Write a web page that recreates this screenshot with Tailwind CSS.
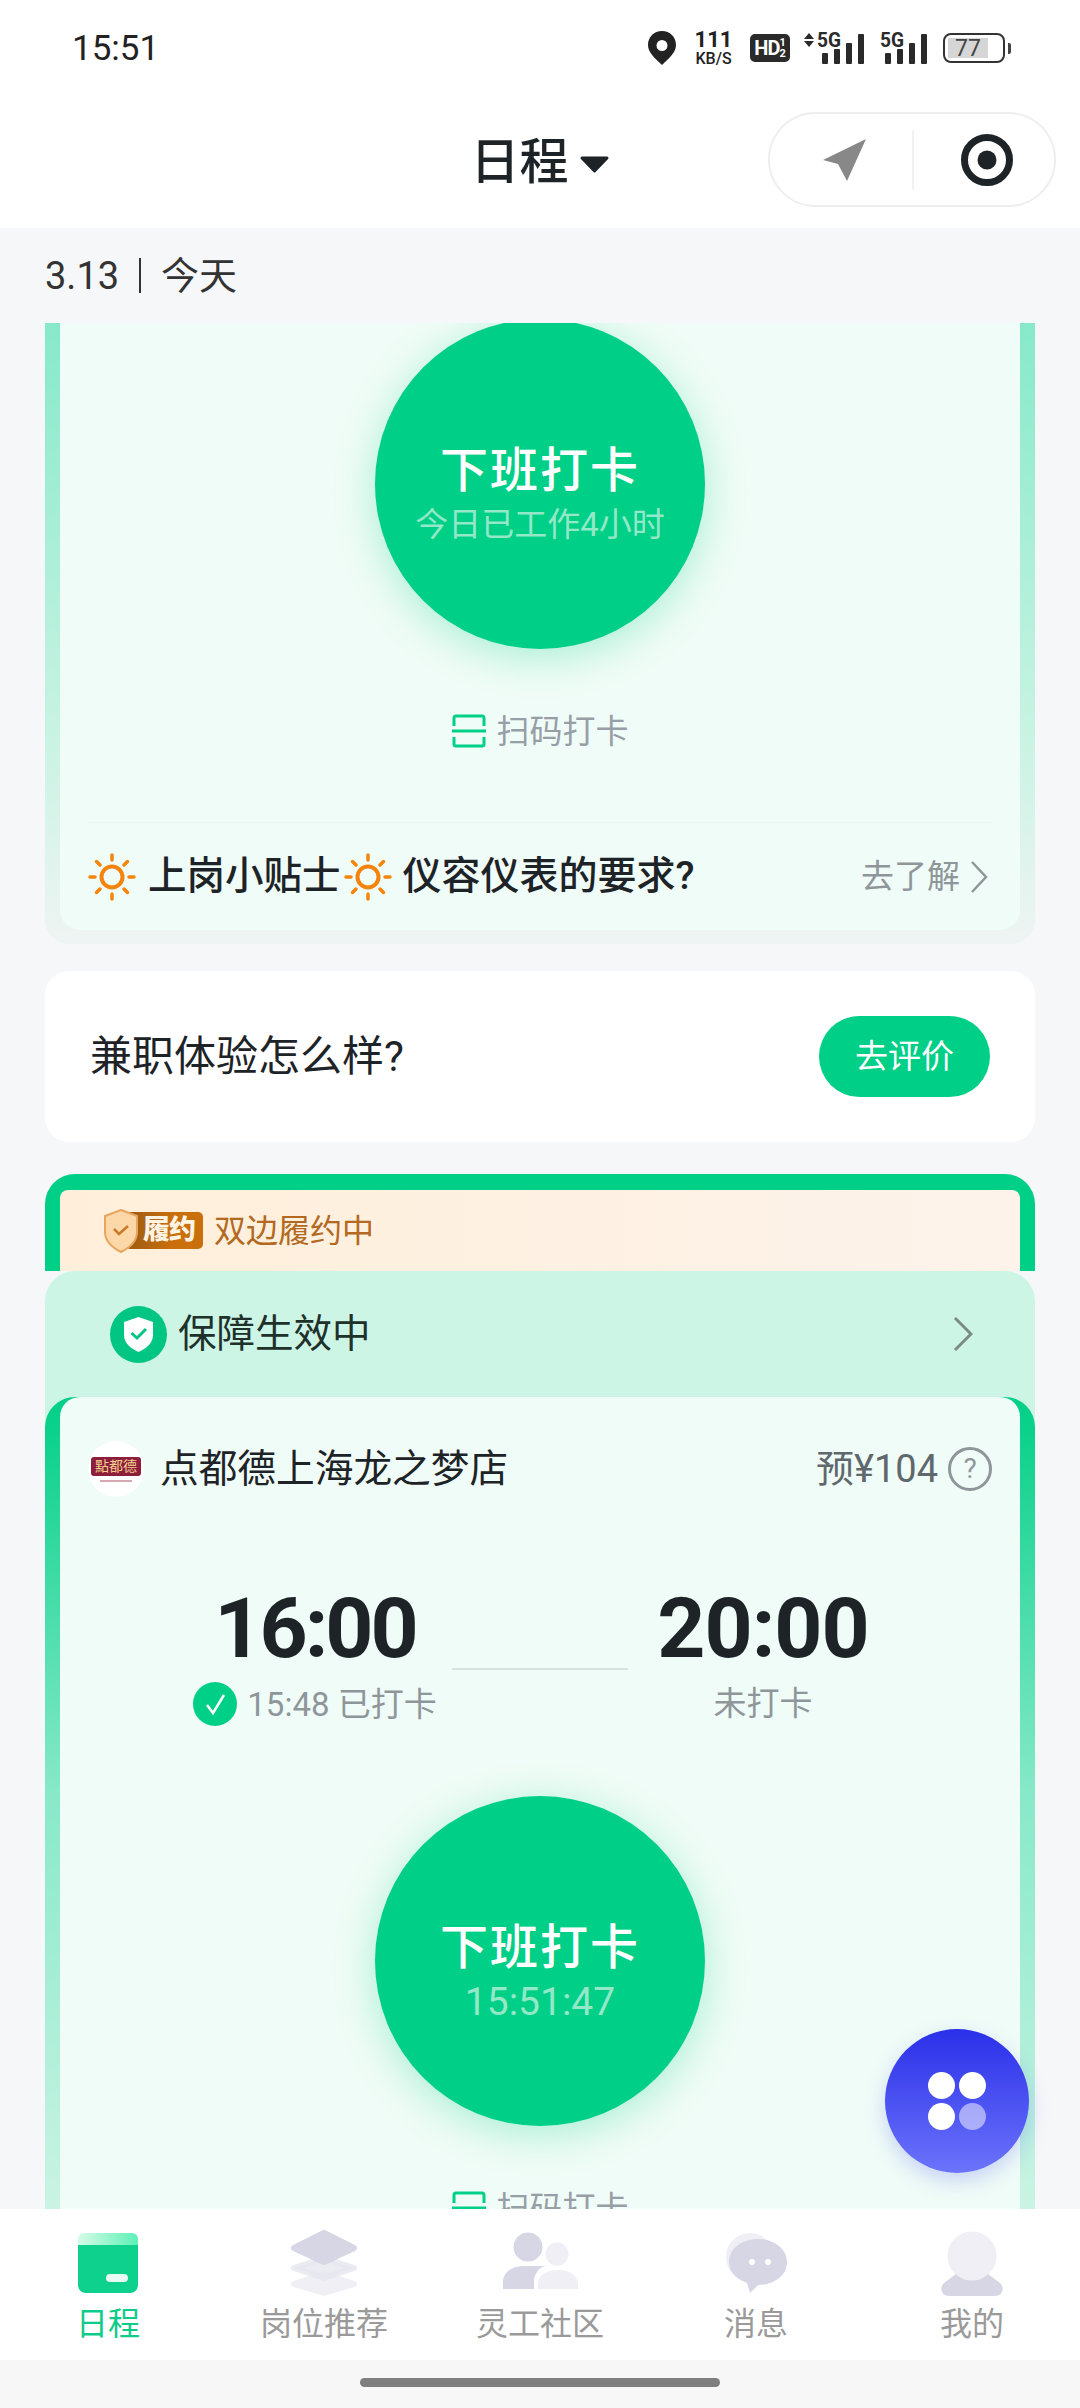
<!DOCTYPE html>
<html lang="zh-CN">
  <head>
    <meta charset="UTF-8" />
    <meta name="viewport" content="width=device-width, initial-scale=1.0" />
    <title>日程</title>
    <script src="https://cdn.jsdelivr.net/npm/@tailwindcss/browser@4"></script>
  </head>
  <body class="bg-white">
    <div class="relative w-[1080px] h-[2408px] flex flex-col overflow-hidden bg-[#f6f7f9] text-[#1d2327] font-['Roboto','Noto_Sans_CJK_SC',sans-serif]">
      <!-- status bar -->
      <div class="h-[100px] shrink-0 bg-white flex items-center pl-[72px] pr-[69px] pb-[4px]">
        <span class="text-[35px] leading-none text-[#222]">15:51</span>
        <div class="ml-auto flex items-center">
          <svg class="w-[28px] h-[34px]" viewBox="0 0 28 34">
            <path fill-rule="evenodd" fill="#222" d="M14 0C6 0 0 6 0 14c0 8 8 14 14 20 6-6 14-12 14-20C28 6 22 0 14 0zm0 9a5.500 5.500 0 1 1 0 11 5.500 5.500 0 0 1 0-11z" />
          </svg>
          <div class="ml-[17px] w-[41px] flex flex-col items-center text-[#222] font-medium">
            <span class="text-[22px] leading-[22px] font-bold">111</span>
            <span class="text-[16px] leading-[16px]">KB/S</span>
          </div>
          <div class="ml-[16px] w-[40px] h-[28px] rounded-[5px] bg-[#2a2a2a] flex items-center justify-center text-white font-bold">
            <span class="text-[20px] leading-none tracking-[-1px]">HD</span>
            <span class="flex flex-col items-center text-[11px] leading-[11px]"><span>1</span><span>2</span></span>
          </div>
          <svg class="ml-[14px] w-[60px] h-[32px] overflow-visible" viewBox="0 0 60 32" fill="#2a2a2a">
            <path d="M5 1 10 7H0zM5 15 0 9H10z" />
            <text x="13" y="15" font-family="Roboto" font-weight="700" font-size="20" textLength="24" lengthAdjust="spacingAndGlyphs">5G</text>
            <rect x="18" y="21" width="6" height="11" rx="1" />
            <rect x="30" y="17" width="6" height="15" rx="1" />
            <rect x="42" y="11" width="6" height="21" rx="1" />
            <rect x="54" y="2" width="6" height="30" rx="1" />
          </svg>
          <svg class="ml-[16px] w-[47px] h-[32px] overflow-visible" viewBox="0 0 47 32" fill="#2a2a2a">
            <text x="0" y="15" font-family="Roboto" font-weight="700" font-size="20" textLength="24" lengthAdjust="spacingAndGlyphs">5G</text>
            <rect x="5" y="21" width="6" height="11" rx="1" />
            <rect x="17" y="17" width="6" height="15" rx="1" />
            <rect x="29" y="11" width="6" height="21" rx="1" />
            <rect x="41" y="2" width="6" height="30" rx="1" />
          </svg>
          <div class="ml-[16px] flex items-center">
            <div class="w-[62px] h-[30px] rounded-[8px] border-[2.500px] border-[#333] p-[3px]">
              <div class="w-[40px] h-full bg-[#d6d6d6] flex items-center justify-center text-[23px] leading-none text-[#444]">77</div>
            </div>
            <div class="ml-[3px] w-[3px] h-[11px] rounded-r-[2px] bg-[#444]"></div>
          </div>
        </div>
      </div>

      <!-- header -->
      <div class="h-[128px] shrink-0 bg-white grid grid-cols-[1fr_auto_1fr] items-center pb-[9px]">
        <div></div>
        <div class="flex items-center text-[49px] font-medium leading-none pt-[5px]">
          <span>日程</span>
          <svg class="ml-[10px] mt-[4px] w-[31px] h-[19px]" viewBox="0 0 31 19">
            <path fill="#1d2327" stroke="#1d2327" stroke-width="3" stroke-linejoin="round" d="M3 3H28L15.500 16Z" />
          </svg>
        </div>
        <div class="flex justify-end pr-[24px]">
          <div class="w-[288px] h-[95px] rounded-[48px] border-2 border-[#eeeeee] flex items-center">
            <svg class="ml-[53px] w-[43px] h-[42px]" viewBox="0 0 43 42">
              <path fill="#888888" d="M43 0 0 21 15 25 24 42Z" />
            </svg>
            <div class="ml-[46px] w-[2px] h-[60px] bg-[#f1f1f1]"></div>
            <svg class="ml-[47px] w-[52px] h-[52px]" viewBox="0 0 52 52">
              <circle cx="26" cy="26" r="22.500" fill="none" stroke="#1d2327" stroke-width="7" />
              <circle cx="26" cy="26" r="9.500" fill="#1d2327" />
            </svg>
          </div>
        </div>
      </div>

      <!-- date -->
      <div class="h-[95px] shrink-0 pl-[45px] flex items-center text-[38px] leading-none text-[#333]">
        <span>3.13</span>
        <span class="mx-[20px] w-[2px] h-[35px] bg-[#333]"></span>
        <span>今天</span>
      </div>

      <!-- scroll area -->
      <div class="flex-1 min-h-0 overflow-hidden px-[45px]">
        <!-- earlier shift -->
        <div class="h-[621px] rounded-b-[24px] px-[15px] bg-[linear-gradient(180deg,#86e9c9_0%,#c8f3e3_66%,#eff4f3_100%)]">
          <div class="h-[607px] rounded-b-[20px] bg-[#f0fcf7] flex flex-col">
            <div class="self-center -mt-[4px] w-[330px] h-[330px] rounded-full bg-[#00cf87] shadow-[0_8px_40px_rgba(0,207,135,0.3)] flex flex-col items-center pt-[123px]">
              <span class="text-[48px] leading-[58px] tracking-[2px] font-medium text-white">下班打卡</span>
              <span class="mt-[5px] text-[33px] leading-[40px] text-[#93e8c8]">今日已工作4小时</span>
            </div>
            <div class="mt-[65px] h-[34px] flex items-center justify-center">
              <svg class="w-[34px] h-[34px]" viewBox="0 0 34 34" fill="none" stroke="#00cf87" stroke-width="3">
                <path d="M2 12V4a2 2 0 0 1 2-2H30a2 2 0 0 1 2 2V12M0 17H34M2 23V30a2 2 0 0 0 2 2H30a2 2 0 0 0 2-2V23" />
              </svg>
              <span class="ml-[11px] text-[33px] leading-none text-[#979ea6]">扫码打卡</span>
            </div>
            <div class="mt-[74px] mx-[28px] h-[1px] bg-[#eef8f3]"></div>
            <div class="h-[107px] pl-[28px] pr-[32px] flex items-center">
              <svg class="w-[48px] h-[48px]" viewBox="0 0 48 48" fill="none" stroke="#f5840c" stroke-width="3.500" stroke-linecap="round">
                <circle cx="24" cy="24" r="10.500" stroke-width="4" />
                <path d="M24 2V7M24 41V46M2 24H7M41 24H46M8.500 8.500 12 12M36 36 39.500 39.500M8.500 39.500 12 36M36 12 39.500 8.500" />
              </svg>
              <span class="ml-[12px] text-[38.500px] leading-none font-medium">上岗小贴士</span>
              <svg class="ml-[3px] w-[48px] h-[48px]" viewBox="0 0 48 48" fill="none" stroke="#f5840c" stroke-width="3.500" stroke-linecap="round">
                <circle cx="24" cy="24" r="10.500" stroke-width="4" />
                <path d="M24 2V7M24 41V46M2 24H7M41 24H46M8.500 8.500 12 12M36 36 39.500 39.500M8.500 39.500 12 36M36 12 39.500 8.500" />
              </svg>
              <span class="ml-[11px] text-[39px] leading-none font-medium">仪容仪表的要求?</span>
              <span class="ml-auto text-[33px] leading-none text-[#8f969a]">去了解</span>
              <svg class="ml-[10px] w-[18px] h-[34px]" viewBox="0 0 18 34" fill="none" stroke="#8f969a" stroke-width="2.500">
                <path d="M2 2 16 17 2 32" />
              </svg>
            </div>
          </div>
        </div>

        <!-- review -->
        <div class="mt-[27px] h-[171px] rounded-[24px] bg-white px-[45px] flex items-center justify-between">
          <span class="text-[42px] leading-none">兼职体验怎么样?</span>
          <span class="w-[171px] h-[81px] rounded-full bg-[#00cf87] flex items-center justify-center text-[33px] leading-none text-white">去评价</span>
        </div>

        <!-- current shift -->
        <div class="mt-[32px] h-[97px] rounded-t-[30px] bg-[#00cf87] px-[15px] pt-[16px]">
          <div class="h-[81px] rounded-t-[8px] pl-[43px] flex items-center bg-[linear-gradient(90deg,#ffefda_0%,#fdf3eb_100%)]">
            <div class="relative w-[100px] h-[44px] flex items-center">
              <div class="ml-[22px] w-[78px] h-[37px] rounded-[5px] bg-[linear-gradient(90deg,#9a5a12_0%,#c96f0c_60%)] pl-[18px] flex items-center text-[27px] leading-none font-black tracking-[-1px] text-[#fff4e4]">履约</div>
              <svg class="absolute left-0 top-0 w-[36px] h-[44px]" viewBox="0 0 36 44">
                <path fill="#fcd8a8" stroke="#e8a560" stroke-width="2" d="M18 1 34 7V23C34 33 26 39 18 43 10 39 2 33 2 23V7Z" />
                <path fill="none" stroke="#c8792a" stroke-width="2.500" d="M11 20 16 25 25 17" />
              </svg>
            </div>
            <span class="ml-[11px] text-[32px] leading-none text-[#b3691f]">双边履约中</span>
          </div>
        </div>
        <div class="rounded-t-[30px] bg-[#ccf5e6]">
          <div class="h-[126px] pl-[65px] pr-[62px] flex items-center">
            <svg class="w-[57px] h-[57px]" viewBox="0 0 57 57">
              <circle cx="28.500" cy="28.500" r="28.500" fill="#00c583" />
              <path fill="#ffffff" d="M28.500 11 43 16V29C43 38 35 43 28.500 46 22 43 14 38 14 29V16Z" />
              <path fill="none" stroke="#00c583" stroke-width="3" d="M21.500 27 27 32 36 23" />
            </svg>
            <span class="ml-[11px] text-[38.500px] leading-none text-[#20302b]">保障生效中</span>
            <svg class="ml-auto w-[20px] h-[36px]" viewBox="0 0 20 36" fill="none" stroke="#7b8a86" stroke-width="3">
              <path d="M2 2 18 18 2 34" />
            </svg>
          </div>
          <div class="h-[1025px] rounded-t-[30px] px-[15px] bg-[linear-gradient(180deg,#00cf87_0%,#88e9c9_39%,#c8f3e3_78%,#eff4f3_100%)]">
            <div class="h-full rounded-t-[20px] bg-[#f0fcf7] pt-[50px]">
              <div class="h-[44px] pl-[28px] pr-[28px] flex items-center">
                <div class="w-[56px] h-[56px] rounded-full bg-white flex flex-col items-center justify-center">
                  <span class="w-[50px] h-[19px] rounded-[3px] bg-[#8d1f3c] text-[14px] leading-[19px] text-center text-[#f3cf8c]">點都德</span>
                  <span class="mt-[4px] w-[32px] h-[2px] bg-[#d6a9b4]"></span>
                </div>
                <span class="ml-[16px] text-[38.700px] leading-none">点都德上海龙之梦店</span>
                <span class="ml-auto text-[38px] leading-none text-[#5f686c]">预¥104</span>
                <span class="ml-[10px] w-[44px] h-[44px] rounded-full border-[3px] border-[#8f969a] flex items-center justify-center text-[28px] leading-none text-[#8f969a]">?</span>
              </div>
              <div class="mt-[98px] pl-[120px] flex items-start">
                <div class="w-[270px] flex flex-col items-center">
                  <span class="text-[84px] leading-[80px] font-bold tracking-[-3px]">16:00</span>
                  <div class="mt-[13px] h-[44px] flex items-center">
                    <svg class="w-[44px] h-[44px]" viewBox="0 0 44 44">
                      <circle cx="22" cy="22" r="22" fill="#00cf87" />
                      <path fill="none" stroke="#ffffff" stroke-width="2.500" d="M14 23 20 31 31 13" />
                    </svg>
                    <span class="ml-[10px] text-[33px] leading-none text-[#8f969a]">15:48 已打卡</span>
                  </div>
                </div>
                <div class="ml-[2px] mt-[79px] w-[176px] h-[2px] bg-[#d8e2de]"></div>
                <div class="w-[270px] flex flex-col items-center">
                  <span class="text-[84px] leading-[80px] font-bold tracking-[-1px]">20:00</span>
                  <span class="mt-[13px] h-[44px] text-[33px] leading-[44px] text-[#8f969a]">未打卡</span>
                </div>
              </div>
              <div class="mx-auto mt-[70px] w-[330px] h-[330px] rounded-full bg-[#00cf87] shadow-[0_8px_40px_rgba(0,207,135,0.3)] flex flex-col items-center pt-[123px]">
                <span class="text-[48px] leading-[58px] tracking-[2px] font-medium text-white">下班打卡</span>
                <span class="mt-[5px] text-[39px] leading-[40px] text-[#93e8c8]">15:51:47</span>
              </div>
              <div class="mt-[65px] h-[34px] flex items-center justify-center">
                <svg class="w-[34px] h-[34px]" viewBox="0 0 34 34" fill="none" stroke="#00cf87" stroke-width="3">
                  <path d="M2 12V4a2 2 0 0 1 2-2H30a2 2 0 0 1 2 2V12M0 17H34M2 23V30a2 2 0 0 0 2 2H30a2 2 0 0 0 2-2V23" />
                </svg>
                <span class="ml-[11px] text-[33px] leading-none text-[#979ea6]">扫码打卡</span>
              </div>
            </div>
          </div>
        </div>
      </div>

      <!-- tab bar -->
      <div class="h-[151px] shrink-0 bg-white grid grid-cols-5 pt-[21px] text-[32px] leading-[40px] text-[#9a9a9a]">
        <div class="flex flex-col items-center">
          <div class="h-[66px] flex items-center">
            <svg class="w-[60px] h-[60px]" viewBox="0 0 60 60">
              <defs>
                <linearGradient id="tabTop" x1="0" y1="0" x2="1" y2="0">
                  <stop offset="0" stop-color="#d5fbe8" />
                  <stop offset="1" stop-color="#5df0b6" />
                </linearGradient>
              </defs>
              <path fill="#0dd18c" d="M0 12H60V52a8 8 0 0 1-8 8H8a8 8 0 0 1-8-8Z" />
              <path fill="url(#tabTop)" d="M6 0H54a6 6 0 0 1 6 6V12H0V6A6 6 0 0 1 6 0Z" />
              <rect x="28" y="41" width="22" height="8" rx="4" fill="#ffffff" fill-opacity="0.9" />
            </svg>
          </div>
          <span class="mt-[8px] text-[#0fcb8a]">日程</span>
        </div>
        <div class="flex flex-col items-center">
          <svg class="w-[68px] h-[66px]" viewBox="0 0 68 66">
            <path fill="#efeff5" stroke="#efeff5" stroke-width="6" stroke-linejoin="round" d="M34 44 64 54 34 63 4 54Z" />
            <path fill="#e6e6ef" fill-opacity="0.8" stroke="#e6e6ef" stroke-opacity="0.8" stroke-width="6" stroke-linejoin="round" d="M34 28 64 38 34 48 4 38Z" />
            <path fill="#d6d6e4" stroke="#d6d6e4" stroke-width="6" stroke-linejoin="round" d="M34 3 64 18 34 32 4 18Z" />
          </svg>
          <span class="mt-[8px]">岗位推荐</span>
        </div>
        <div class="flex flex-col items-center">
          <svg class="mt-[2px] w-[75px] h-[64px]" viewBox="0 0 75 64">
            <circle cx="54" cy="22" r="11.500" fill="#efeff5" />
            <path fill="#efeff5" d="M35 57V52C35 44 43 38 55 38 67 38 75 44 75 52V57Z" />
            <circle cx="25" cy="15" r="14.500" fill="#d6d6e4" />
            <path fill="#d6d6e4" d="M0 57V50C0 40 9 34 22 34H42C35 36 31 43 31 50V57Z" />
          </svg>
          <span class="mt-[8px]">灵工社区</span>
        </div>
        <div class="flex flex-col items-center">
          <svg class="mt-[3px] w-[61px] h-[60px]" viewBox="0 0 61 60">
            <circle cx="24" cy="24" r="24" fill="#efeff5" />
            <path fill="#d6d6e4" d="M32 6C47 6 61 15 61 29 61 43 47 52 32 52L24 60 21 50C10 46 3 39 3 29 3 15 17 6 32 6Z" />
            <circle cx="26" cy="29" r="3" fill="#ffffff" />
            <circle cx="42" cy="29" r="3" fill="#ffffff" />
          </svg>
          <span class="mt-[11px]">消息</span>
        </div>
        <div class="flex flex-col items-center">
          <svg class="mt-[1px] w-[64px] h-[65px]" viewBox="0 0 64 65">
            <path fill="#d6d6e4" d="M20 40H44L60 52C65 57 63 65 54 65H10C1 65 -1 57 4 52Z" />
            <circle cx="32" cy="25" r="24.500" fill="#efeff5" />
          </svg>
          <span class="mt-[8px]">我的</span>
        </div>
      </div>

      <!-- home indicator -->
      <div class="h-[48px] shrink-0 bg-[#f7f7f7] flex justify-center pt-[18px]">
        <div class="w-[360px] h-[9px] rounded-full bg-[#7f7f7f]"></div>
      </div>

      <!-- floating button -->
      <div class="absolute left-[885px] top-[2029px] w-[144px] h-[144px] rounded-full bg-[linear-gradient(180deg,#2a30e8_0%,#6c73fb_100%)] shadow-[0_8px_20px_rgba(80,90,240,0.25)] grid grid-cols-[27px_27px] grid-rows-[27px_27px] gap-[4px] content-center justify-center">
        <span class="rounded-full bg-white"></span>
        <span class="rounded-full bg-white"></span>
        <span class="rounded-full bg-white"></span>
        <span class="rounded-full bg-white/50"></span>
      </div>
    </div>
  </body>
</html>
